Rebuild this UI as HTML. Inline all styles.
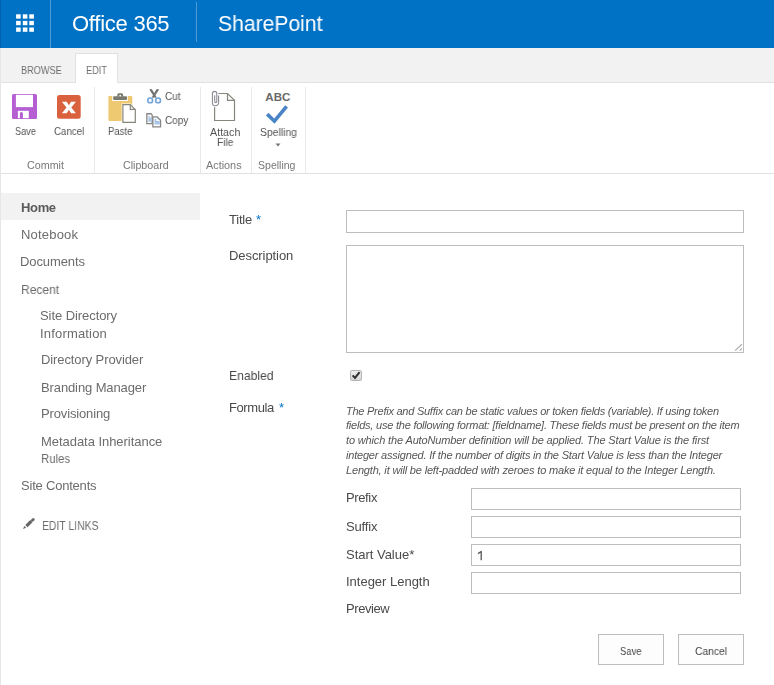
<!DOCTYPE html>
<html><head><meta charset="utf-8">
<style>
html,body{margin:0;padding:0;width:774px;height:685px;overflow:hidden;background:#fff;font-family:"Liberation Sans",sans-serif;position:relative}
.t{position:absolute;white-space:nowrap;line-height:normal;will-change:transform}
.a{position:absolute}
.box{position:absolute;box-sizing:border-box;border:1px solid #bdbdbd;background:#fff}
</style></head><body>
<!-- left page edge -->
<div class="a" style="left:0;top:48px;width:1px;height:637px;background:#e6e6e6"></div>
<!-- suite bar -->
<div class="a" style="left:0;top:0;width:774px;height:48px;background:#0072c6"></div>
<div class="a" style="left:0;top:0;width:1px;height:48px;background:#0062ab"></div>
<div class="a" style="left:50px;top:0;width:1px;height:48px;background:#4a9ad6"></div>
<div class="a" style="left:196px;top:2px;width:1px;height:40px;background:#4a9ad6"></div>
<svg class="a" style="left:0;top:0" width="50" height="48" viewBox="0 0 50 48"><g fill="#fff"><rect x="16.1" y="14.3" width="4.6" height="4.3"/><rect x="22.8" y="14.3" width="4.6" height="4.3"/><rect x="29.3" y="14.3" width="4.6" height="4.3"/><rect x="16.1" y="20.9" width="4.6" height="4.3"/><rect x="22.8" y="20.9" width="4.6" height="4.3"/><rect x="29.3" y="20.9" width="4.6" height="4.3"/><rect x="16.1" y="27.5" width="4.6" height="4.3"/><rect x="22.8" y="27.5" width="4.6" height="4.3"/><rect x="29.3" y="27.5" width="4.6" height="4.3"/></g></svg>
<!-- tab bar -->
<div class="a" style="left:1px;top:48px;width:773px;height:34px;background:#f2f2f2"></div>
<div class="a" style="left:1px;top:82px;width:773px;height:1px;background:#e1e1e1"></div>
<div class="a" style="left:75px;top:53px;width:43px;height:30px;box-sizing:border-box;border:1px solid #e1e1e1;border-bottom:none;background:#fff"></div>
<!-- ribbon -->
<div class="a" style="left:1px;top:173px;width:773px;height:1px;background:#e1e1e1"></div>
<div class="a" style="left:94px;top:87px;width:1px;height:86px;background:#e9e9e9"></div>
<div class="a" style="left:200px;top:87px;width:1px;height:86px;background:#e9e9e9"></div>
<div class="a" style="left:251px;top:87px;width:1px;height:86px;background:#e9e9e9"></div>
<div class="a" style="left:305px;top:87px;width:1px;height:86px;background:#e9e9e9"></div>
<!-- save icon -->
<svg class="a" style="left:12px;top:94px" width="26" height="26" viewBox="0 0 26 26">
<rect x="0" y="0" width="25" height="25" rx="1.5" fill="#b55fd2"/>
<rect x="3.9" y="0.8" width="17.1" height="12.3" fill="#fff"/>
<rect x="5.9" y="16.8" width="10.9" height="7.4" fill="#fff"/>
<path d="M7.9 25 V19.6 A1.5 1.5 0 0 1 10.9 19.6 V25 Z" fill="#b55fd2"/>
</svg>
<!-- cancel icon -->
<svg class="a" style="left:57px;top:95px" width="25" height="25" viewBox="0 0 25 25">
<rect x="0" y="0" width="23.7" height="23.7" rx="2.5" fill="#da613e"/>
<path d="M4.9 6.85 H9.7 L11.9 10.2 L14.1 6.85 H18.9 L14.3 12.5 L18.9 18.2 H14.1 L11.9 14.8 L9.7 18.2 H4.9 L9.5 12.5 Z" fill="#fff"/>
</svg>
<!-- paste icon -->
<svg class="a" style="left:104px;top:88px" width="36" height="38" viewBox="0 0 36 38">
<rect x="4.4" y="8" width="23.9" height="25" rx="1.2" fill="#efc872"/>
<rect x="8.3" y="8" width="15.5" height="5" fill="#fff"/>
<rect x="9.2" y="8.3" width="13.8" height="3.6" rx="0.8" fill="#797970"/>
<path d="M13.3 8.5 V6.8 A1.5 1.5 0 0 1 14.8 5.3 H17.6 A1.5 1.5 0 0 1 19.1 6.8 V8.5 Z" fill="#797970"/>
<circle cx="16.2" cy="7.6" r="0.9" fill="#fff"/>
<path d="M17.7 15.5 H26.8 L32.5 21.2 V35.5 H17.7 Z" fill="#fff"/>
<path d="M18.9 16.7 H26.3 L31.3 21.7 V34.3 H18.9 Z" fill="#fff" stroke="#85857c" stroke-width="1.2"/>
<path d="M26.3 16.7 V21.4 H31.3" fill="none" stroke="#85857c" stroke-width="1.2"/>
</svg>
<!-- cut icon -->
<svg class="a" style="left:142px;top:86px" width="24" height="20" viewBox="0 0 24 20">
<path d="M7.4 3.8 Q8.6 2.3 10.1 3.4 L14.6 11.2 L12.9 11.9 Z" fill="#727272"/>
<path d="M17 3.8 Q15.8 2.3 14.3 3.4 L9.8 11.2 L11.5 11.9 Z" fill="#727272"/>
<circle cx="8.2" cy="14.4" r="2.4" fill="#fff" stroke="#76a3d8" stroke-width="1.6"/>
<circle cx="16.1" cy="14.4" r="2.4" fill="#fff" stroke="#76a3d8" stroke-width="1.6"/>
</svg>
<!-- copy icon -->
<svg class="a" style="left:142px;top:110px" width="24" height="20" viewBox="0 0 24 20">
<path d="M4.85 3.75 H9 L10.15 4.9 V13.65 H4.85 Z" fill="#fff" stroke="#858585" stroke-width="1.3"/>
<path d="M6.4 5.8 H7.6 V7.5 H9.6 V11.7 H6.4 Z" fill="#a9c6e8"/>
<path d="M10.85 6.95 H15.1 L18.55 10.2 V16.85 H10.85 Z" fill="#fff" stroke="#858585" stroke-width="1.3"/>
<path d="M12.5 8.8 H14.2 V11 H17.8 V14.6 H12.5 Z" fill="#a9c6e8"/>
</svg>
<!-- attach icon -->
<svg class="a" style="left:205px;top:86px" width="40" height="40" viewBox="0 0 40 40">
<path d="M13.4 7.5 H22.5 L29.5 14.3 V34.5 H9.6 V21.3" fill="none" stroke="#86867d" stroke-width="1.2"/>
<path d="M22.5 7.5 V14.3 H29.5" fill="none" stroke="#86867d" stroke-width="1.2"/>
<path d="M9.7 9.3 V15.6 A1.05 1.05 0 0 0 11.8 15.6 V7.6 A2.2 2.2 0 0 0 7.4 7.6 V16.7 A3.1 3.1 0 0 0 13.6 16.7 V9.5" fill="none" stroke="#8b8b95" stroke-width="1.1"/>
</svg>
<!-- spelling icon -->
<svg class="a" style="left:258px;top:86px" width="40" height="40" viewBox="0 0 40 40">
<text x="7.3" y="15.4" font-family="Liberation Sans" font-weight="bold" font-size="11" fill="#6a6a6a" textLength="25" lengthAdjust="spacingAndGlyphs">ABC</text>
<path d="M9.2 28.1 L16.4 35.2 L28.6 20.3" fill="none" stroke="#4a84c6" stroke-width="3.6"/>
</svg>
<svg class="a" style="left:275px;top:143px" width="6" height="4" viewBox="0 0 6 4"><path d="M0.5 0.5 H5.5 L3 3.5 Z" fill="#777"/></svg>
<!-- nav highlight -->
<div class="a" style="left:1px;top:193px;width:199px;height:27px;background:#f2f2f2"></div>
<!-- pencil -->
<svg class="a" style="left:22px;top:517px" width="14" height="14" viewBox="0 0 14 14">
<path d="M4.4 9.2 L9.4 4.2" stroke="#666" stroke-width="3.2"/>
<path d="M10.4 3.3 L11.3 2.4" stroke="#666" stroke-width="2.8" stroke-linecap="round"/>
<path d="M1.0 12.1 L2.3 8.9 L4.2 10.8 Z" fill="#666"/>
</svg>
<!-- form inputs -->
<div class="box" style="left:346px;top:210px;width:398px;height:23px"></div>
<div class="box" style="left:346px;top:245px;width:398px;height:108px"></div>
<svg class="a" style="left:730px;top:340px" width="14" height="14" viewBox="0 0 14 14"><path d="M5.1 10.6 L11.9 4.2 M9.7 10.6 L11.9 8.4" stroke="#b0b0b0" stroke-width="1.3"/></svg>
<!-- checkbox -->
<div class="a" style="left:350px;top:370px;width:12px;height:11px;box-sizing:border-box;border:1px solid #b5b5b5;border-radius:2px;background:linear-gradient(#eeeeee,#d9d9d9)"></div>
<svg class="a" style="left:350px;top:369px" width="12" height="12" viewBox="0 0 12 12"><path d="M2.6 6.4 L5 9 L9.6 3.2" fill="none" stroke="#333" stroke-width="2.1"/></svg>

<div class="box" style="left:471px;top:488px;width:270px;height:22px"></div>
<div class="box" style="left:471px;top:516px;width:270px;height:22px"></div>
<div class="box" style="left:471px;top:544px;width:270px;height:22px"></div>
<div class="box" style="left:471px;top:572px;width:270px;height:22px"></div>
<!-- buttons -->
<div class="box" style="left:598px;top:634px;width:66px;height:31px;background:#fdfdfd"></div>
<div class="box" style="left:678px;top:634px;width:66px;height:31px;background:#fdfdfd"></div>
<svg class="a" style="left:476px;top:549px" width="8" height="13" viewBox="0 0 8 13"><path d="M5.2 2 V11.2 M5.6 2.2 L2 4.6" fill="none" stroke="#555" stroke-width="1.3"/></svg>
<div class="t" style="left:71.80px;top:11.20px;font-size:22px;color:#fff;letter-spacing:-0.253px;font-weight:normal;font-style:normal;">Office 365</div>
<div class="t" style="left:217.60px;top:11.40px;font-size:22px;color:#fff;font-weight:normal;font-style:normal;transform:scaleX(0.9589);transform-origin:0 0;">SharePoint</div>
<div class="t" style="left:20.50px;top:64.40px;font-size:11px;color:#6e6e6e;font-weight:normal;font-style:normal;transform:scaleX(0.8348);transform-origin:0 0;">BROWSE</div>
<div class="t" style="left:85.70px;top:64.40px;font-size:11px;color:#6e6e6e;font-weight:normal;font-style:normal;transform:scaleX(0.8400);transform-origin:0 0;">EDIT</div>
<div class="t" style="left:14.50px;top:125.40px;font-size:10.5px;color:#555;font-weight:normal;font-style:normal;transform:scaleX(0.8796);transform-origin:0 0;">Save</div>
<div class="t" style="left:54.00px;top:125.40px;font-size:10.5px;color:#555;font-weight:normal;font-style:normal;transform:scaleX(0.9257);transform-origin:0 0;">Cancel</div>
<div class="t" style="left:108.00px;top:125.40px;font-size:10.5px;color:#555;font-weight:normal;font-style:normal;transform:scaleX(0.9116);transform-origin:0 0;">Paste</div>
<div class="t" style="left:165.40px;top:89.90px;font-size:10.5px;color:#555;font-weight:normal;font-style:normal;transform:scaleX(0.9527);transform-origin:0 0;">Cut</div>
<div class="t" style="left:165.40px;top:113.80px;font-size:10.5px;color:#555;font-weight:normal;font-style:normal;transform:scaleX(0.9510);transform-origin:0 0;">Copy</div>
<div class="t" style="left:210.00px;top:125.50px;font-size:10.5px;color:#555;font-weight:normal;font-style:normal;transform:scaleX(1.0218);transform-origin:0 0;">Attach</div>
<div class="t" style="left:217.00px;top:135.50px;font-size:10.5px;color:#555;font-weight:normal;font-style:normal;transform:scaleX(0.9719);transform-origin:0 0;">File</div>
<div class="t" style="left:259.80px;top:125.80px;font-size:10.5px;color:#555;font-weight:normal;font-style:normal;transform:scaleX(0.9873);transform-origin:0 0;">Spelling</div>
<div class="t" style="left:27.10px;top:159.30px;font-size:10.5px;color:#777;font-weight:normal;font-style:normal;transform:scaleX(1.0215);transform-origin:0 0;">Commit</div>
<div class="t" style="left:122.60px;top:159.30px;font-size:10.5px;color:#777;font-weight:normal;font-style:normal;transform:scaleX(1.0156);transform-origin:0 0;">Clipboard</div>
<div class="t" style="left:205.80px;top:159.30px;font-size:10.5px;color:#777;font-weight:normal;font-style:normal;transform:scaleX(1.0327);transform-origin:0 0;">Actions</div>
<div class="t" style="left:257.80px;top:159.30px;font-size:10.5px;color:#777;font-weight:normal;font-style:normal;transform:scaleX(1.0033);transform-origin:0 0;">Spelling</div>
<div class="t" style="left:20.70px;top:200.00px;font-size:13px;color:#5a5a5a;letter-spacing:-0.342px;font-weight:bold;font-style:normal;">Home</div>
<div class="t" style="left:20.50px;top:227.30px;font-size:13px;color:#6c6c6c;letter-spacing:0.193px;font-weight:normal;font-style:normal;">Notebook</div>
<div class="t" style="left:20.20px;top:254.30px;font-size:13px;color:#6c6c6c;letter-spacing:-0.106px;font-weight:normal;font-style:normal;">Documents</div>
<div class="t" style="left:20.50px;top:281.50px;font-size:13px;color:#6c6c6c;font-weight:normal;font-style:normal;transform:scaleX(0.9285);transform-origin:0 0;">Recent</div>
<div class="t" style="left:40.30px;top:308.40px;font-size:13px;color:#6c6c6c;letter-spacing:-0.069px;font-weight:normal;font-style:normal;">Site Directory</div>
<div class="t" style="left:40.40px;top:325.60px;font-size:13px;color:#6c6c6c;letter-spacing:0.180px;font-weight:normal;font-style:normal;">Information</div>
<div class="t" style="left:40.70px;top:352.30px;font-size:13px;color:#6c6c6c;letter-spacing:-0.100px;font-weight:normal;font-style:normal;">Directory Provider</div>
<div class="t" style="left:40.70px;top:379.50px;font-size:13px;color:#6c6c6c;letter-spacing:-0.113px;font-weight:normal;font-style:normal;">Branding Manager</div>
<div class="t" style="left:40.70px;top:406.30px;font-size:13px;color:#6c6c6c;letter-spacing:-0.143px;font-weight:normal;font-style:normal;">Provisioning</div>
<div class="t" style="left:40.70px;top:434.00px;font-size:13px;color:#6c6c6c;letter-spacing:-0.043px;font-weight:normal;font-style:normal;">Metadata Inheritance</div>
<div class="t" style="left:40.70px;top:450.50px;font-size:13px;color:#6c6c6c;font-weight:normal;font-style:normal;transform:scaleX(0.8752);transform-origin:0 0;">Rules</div>
<div class="t" style="left:20.50px;top:477.70px;font-size:13px;color:#6c6c6c;letter-spacing:-0.208px;font-weight:normal;font-style:normal;">Site Contents</div>
<div class="t" style="left:42.30px;top:519.00px;font-size:12.5px;color:#6c6c6c;font-weight:normal;font-style:normal;transform:scaleX(0.8324);transform-origin:0 0;">EDIT LINKS</div>
<div class="t" style="left:228.70px;top:212.20px;font-size:13px;color:#4a4a4a;letter-spacing:-0.206px;font-weight:normal;font-style:normal;">Title</div>
<div class="t" style="left:255.90px;top:212.00px;font-size:13px;color:#0072c6;letter-spacing:0.000px;font-weight:normal;font-style:normal;">*</div>
<div class="t" style="left:228.70px;top:247.70px;font-size:13px;color:#4a4a4a;letter-spacing:-0.070px;font-weight:normal;font-style:normal;">Description</div>
<div class="t" style="left:228.70px;top:367.80px;font-size:13px;color:#4a4a4a;font-weight:normal;font-style:normal;transform:scaleX(0.9340);transform-origin:0 0;">Enabled</div>
<div class="t" style="left:228.70px;top:399.80px;font-size:13px;color:#4a4a4a;letter-spacing:-0.408px;font-weight:normal;font-style:normal;">Formula</div>
<div class="t" style="left:278.90px;top:399.60px;font-size:13px;color:#0072c6;letter-spacing:0.000px;font-weight:normal;font-style:normal;">*</div>
<div class="t" style="left:346.30px;top:404.50px;font-size:11px;color:#555;letter-spacing:-0.247px;font-weight:normal;font-style:italic;">The Prefix and Suffix can be static values or token fields (variable). If using token</div>
<div class="t" style="left:346.30px;top:419.30px;font-size:11px;color:#555;letter-spacing:-0.222px;font-weight:normal;font-style:italic;">fields, use the following format: [fieldname]. These fields must be present on the item</div>
<div class="t" style="left:346.30px;top:434.20px;font-size:11px;color:#555;letter-spacing:-0.146px;font-weight:normal;font-style:italic;">to which the AutoNumber definition will be applied. The Start Value is the first</div>
<div class="t" style="left:346.30px;top:449.10px;font-size:11px;color:#555;letter-spacing:-0.204px;font-weight:normal;font-style:italic;">integer assigned. If the number of digits in the Start Value is less than the Integer</div>
<div class="t" style="left:346.30px;top:464.20px;font-size:11px;color:#555;letter-spacing:-0.174px;font-weight:normal;font-style:italic;">Length, it will be left-padded with zeroes to make it equal to the Integer Length.</div>
<div class="t" style="left:346.30px;top:490.20px;font-size:13px;color:#4a4a4a;letter-spacing:-0.370px;font-weight:normal;font-style:normal;">Prefix</div>
<div class="t" style="left:346.30px;top:518.80px;font-size:13px;color:#4a4a4a;letter-spacing:-0.170px;font-weight:normal;font-style:normal;">Suffix</div>
<div class="t" style="left:346.30px;top:546.70px;font-size:13px;color:#4a4a4a;letter-spacing:-0.016px;font-weight:normal;font-style:normal;">Start Value*</div>
<div class="t" style="left:346.30px;top:573.80px;font-size:13px;color:#4a4a4a;letter-spacing:-0.013px;font-weight:normal;font-style:normal;">Integer Length</div>
<div class="t" style="left:346.30px;top:601.30px;font-size:13px;color:#4a4a4a;letter-spacing:-0.413px;font-weight:normal;font-style:normal;">Preview</div>
<div class="t" style="left:620.20px;top:644.70px;font-size:11px;color:#444;font-weight:normal;font-style:normal;transform:scaleX(0.8597);transform-origin:0 0;">Save</div>
<div class="t" style="left:695.00px;top:644.70px;font-size:11px;color:#444;font-weight:normal;font-style:normal;transform:scaleX(0.9343);transform-origin:0 0;">Cancel</div>
</body></html>
